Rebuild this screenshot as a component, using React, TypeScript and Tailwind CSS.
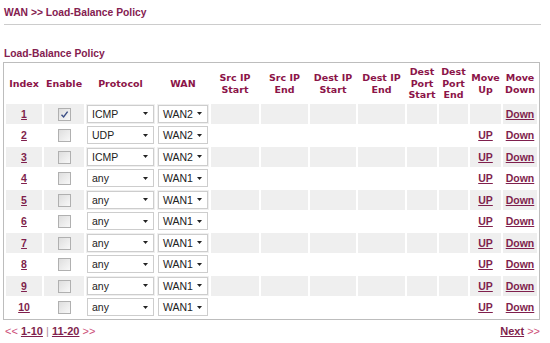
import React from 'react';

type Rule = { id: number; enabled: boolean; protocol: string; wan: string };

const rules: Rule[] = [
  { id: 1, enabled: true, protocol: 'ICMP', wan: 'WAN2' },
  { id: 2, enabled: false, protocol: 'UDP', wan: 'WAN2' },
  { id: 3, enabled: false, protocol: 'ICMP', wan: 'WAN2' },
  { id: 4, enabled: false, protocol: 'any', wan: 'WAN1' },
  { id: 5, enabled: false, protocol: 'any', wan: 'WAN1' },
  { id: 6, enabled: false, protocol: 'any', wan: 'WAN1' },
  { id: 7, enabled: false, protocol: 'any', wan: 'WAN1' },
  { id: 8, enabled: false, protocol: 'any', wan: 'WAN1' },
  { id: 9, enabled: false, protocol: 'any', wan: 'WAN1' },
  { id: 10, enabled: false, protocol: 'any', wan: 'WAN1' },
];

const headers = [
  ['Index'],
  ['Enable'],
  ['Protocol'],
  ['WAN'],
  ['Src IP', 'Start'],
  ['Src IP', 'End'],
  ['Dest IP', 'Start'],
  ['Dest IP', 'End'],
  ['Dest', 'Port', 'Start'],
  ['Dest', 'Port', 'End'],
  ['Move', 'Up'],
  ['Move', 'Down'],
];

const widths = [36, 40, 69, 52, 48, 47, 46, 47, 30, 29, 31, 34];

function Checkbox({ checked }: { checked: boolean }) {
  return (
    <span className="inline-flex w-[13px] h-[13px] border border-[#b0b0b0] bg-gradient-to-br from-[#dedede] to-[#f8f8f8] items-center justify-center align-middle">
      {checked && (
        <svg width="9" height="9" viewBox="0 0 9 9">
          <path d="M1.5 4.8 L3.6 7 L7.6 1.6" fill="none" stroke="#3c4f86" strokeWidth="1.4" />
        </svg>
      )}
    </span>
  );
}

function FakeSelect({ value, w }: { value: string; w: string }) {
  return (
    <div className={`${w} h-[18px] mx-auto bg-white border border-[#cdcdcd] flex items-center justify-between pl-[4px] pr-[5px] text-[10.5px] leading-[12px] text-[#222]`}>
      <span>{value}</span>
      <svg width="5" height="3" viewBox="0 0 5 3">
        <path d="M0 0 H5 L2.5 3 Z" fill="#222" />
      </svg>
    </div>
  );
}

export default function App() {
  const link = 'text-[#7f1f4d] font-bold underline';
  return (
    <div className="w-[550px] h-[343px] bg-white font-['Liberation_Sans',Arial,sans-serif] overflow-hidden">
      <div className="ml-[4px] w-[537px] pt-[7px] pb-[5px] border-b border-[#cccccc] leading-[12px] text-[10.3px] font-bold text-[#84204f]">
        WAN &gt;&gt; Load-Balance Policy
      </div>
      <div className="ml-[4px] mt-[23px] leading-[12px] text-[10.3px] font-bold text-[#84204f]">
        Load-Balance Policy
      </div>
      <div className="ml-[3px] mt-[2px] w-[537px] border border-[#bdbdbd]">
        <table className="table-fixed w-[535px] border-separate border-spacing-[2px]">
          <colgroup>
            {widths.map((w, i) => (
              <col key={i} style={{ width: w }} />
            ))}
          </colgroup>
          <thead>
            <tr>
              {headers.map((h, i) => (
                <th
                  key={i}
                  className="h-[37px] p-0 text-center align-middle font-['DejaVu_Sans',Verdana,sans-serif] text-[9.5px] leading-[11.5px] font-bold text-[#8b1448]"
                >
                  {h.map((line, j) => (
                    <div key={j}>{line}</div>
                  ))}
                </th>
              ))}
            </tr>
          </thead>
          <tbody>
            {rules.map((r) => {
              const bg = r.id % 2 === 1 ? 'bg-[#efefef]' : 'bg-white';
              const td = `${bg} h-[19.5px] p-0 text-center align-middle text-[10.5px] leading-[12px]`;
              return (
                <tr key={r.id}>
                  <td className={td}>
                    <a className={link}>{r.id}</a>
                  </td>
                  <td className={td}>
                    <Checkbox checked={r.enabled} />
                  </td>
                  <td className={td}>
                    <FakeSelect value={r.protocol} w="w-[67px]" />
                  </td>
                  <td className={td}>
                    <FakeSelect value={r.wan} w="w-[50px]" />
                  </td>
                  <td className={td} />
                  <td className={td} />
                  <td className={td} />
                  <td className={td} />
                  <td className={td} />
                  <td className={td} />
                  <td className={td}>
                    {r.id !== 1 && <a className={link}>UP</a>}
                  </td>
                  <td className={td}>
                    <a className={link}>Down</a>
                  </td>
                </tr>
              );
            })}
          </tbody>
        </table>
      </div>
      <div className="mt-[5px] pl-[5px] pr-[10px] flex justify-between leading-[12px] text-[11px]">
        <div>
          <span className="text-[#cc4d77]">&lt;&lt; </span>
          <a className={link}>1-10</a>
          <span className="text-[#b08a9a]"> | </span>
          <a className={link}>11-20</a>
          <span className="text-[#cc4d77]"> &gt;&gt;</span>
        </div>
        <div>
          <a className={link}>Next</a>
          <span className="text-[#cc4d77]"> &gt;&gt;</span>
        </div>
      </div>
    </div>
  );
}
